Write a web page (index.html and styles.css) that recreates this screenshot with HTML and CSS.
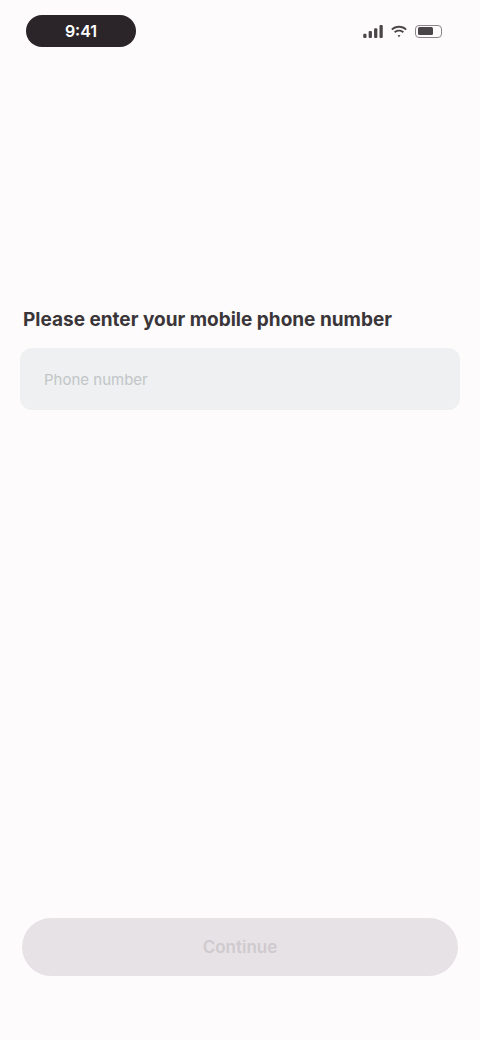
FILE: index.html
```html
<!DOCTYPE html>
<html lang="en">
<head>
<meta charset="utf-8">
<title>Sign up</title>
<link rel="stylesheet" href="styles.css">
</head>
<body>
<div class="screen">
  <header class="status">
    <div class="time-pill">9:41</div>
    <div class="status-icons">
      <svg class="sig" width="20" height="13" viewBox="0 0 18 12"><rect x="0" y="8" width="3" height="4" rx="1"/><rect x="5" y="5.5" width="3" height="6.5" rx="1"/><rect x="10" y="3" width="3" height="9" rx="1"/><rect x="15" y="0" width="3" height="12" rx="1"/></svg>
      <svg class="wifi" width="18" height="13" viewBox="0 0 16 12"><path d="M8 2.5c2.3 0 4.4.9 6 2.4l1.2-1.3C13.3 1.8 10.8.8 8 .8S2.7 1.8.8 3.6L2 4.9c1.6-1.5 3.7-2.4 6-2.4z"/><path d="M8 6c1.3 0 2.5.5 3.4 1.3l1.2-1.3C11.4 4.9 9.8 4.3 8 4.3S4.6 4.9 3.4 6l1.2 1.3C5.5 6.5 6.7 6 8 6z"/><path d="M8 9.3c.5 0 1 .2 1.3.5L8 11.2 6.7 9.8c.3-.3.8-.5 1.3-.5z"/></svg>
      <div class="battery"><div class="level"></div></div>
    </div>
  </header>
  <main class="content">
    <h1 class="title">Please enter your mobile phone number</h1>
    <div class="field">Phone number</div>
  </main>
  <footer class="actions">
    <button class="btn" disabled>Continue</button>
  </footer>
</div>
</body>
</html>
```
FILE: styles.css
```css
html, body {
  margin: 0;
  padding: 0;
  background: #fdfbfb;
}
body {
  font-family: Inter, "Noto Sans", sans-serif;
  color: #2a2629;
}
.screen {
  width: 480px;
  height: 1040px;
  display: flex;
  flex-direction: column;
}
.status {
  display: flex;
  justify-content: space-between;
  align-items: center;
  padding: 14px 38px 0 26px;
  height: 34px;
}
.time-pill {
  width: 110px;
  height: 32px;
  border-radius: 16px;
  background: #2b2529;
  color: #ffffff;
  font-size: 16px;
  font-weight: 600;
  display: flex;
  align-items: center;
  justify-content: center;
}
.status-icons {
  display: flex;
  align-items: center;
  gap: 7px;
  fill: #4a4549;
}
.battery {
  width: 27px;
  height: 13px;
  border: 1.5px solid #8a8589;
  border-radius: 4px;
  padding: 1.5px;
  box-sizing: border-box;
}
.battery .level {
  width: 70%;
  height: 100%;
  background: #4a4549;
  border-radius: 1.5px;
}
.content {
  flex: 1;
  padding: 260px 20px 0 20px;
}
.title {
  margin: 0 0 0 3px;
  font-size: 19px;
  font-weight: 700;
  color: #3a3538;
  line-height: 24px;
}
.field {
  margin-top: 16px;
  height: 62px;
  border-radius: 12px;
  background: #eef0f1;
  color: #c2c5c8;
  font-size: 15px;
  display: flex;
  align-items: center;
  padding: 0 24px;
}
.actions {
  padding: 0 22px 64px 22px;
}
.btn {
  width: 100%;
  height: 58px;
  border: none;
  border-radius: 29px;
  background: #e6e2e6;
  color: #cfcace;
  font-family: inherit;
  font-size: 17px;
  font-weight: 600;
}
```
